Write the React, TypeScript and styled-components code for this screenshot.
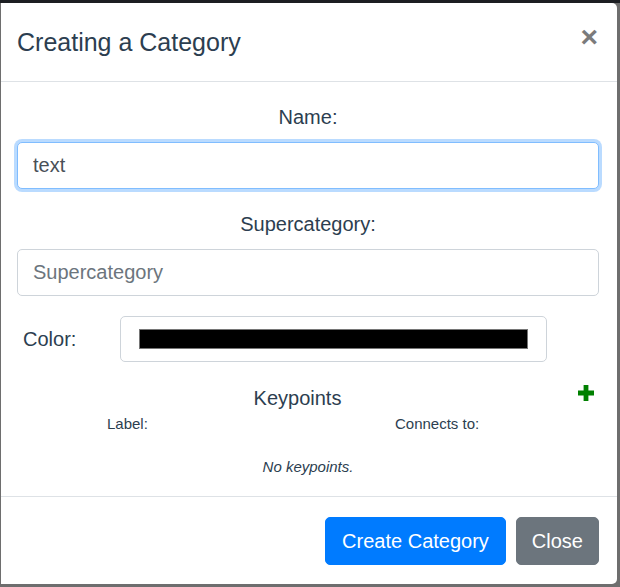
import React, { useState } from 'react';
import styled, { createGlobalStyle } from 'styled-components';

const GlobalStyle = createGlobalStyle`
  html, body {
    margin: 0;
    padding: 0;
  }

  body {
    background: #6e6e6e;
    font-family: "Liberation Sans", Arial, sans-serif;
    color: #2c3e50;
  }
`;

const Backdrop = styled.div`
  width: 620px;
  height: 587px;
  overflow: hidden;
  background: #6e6e6e;
`;

const NavStrip = styled.div`
  height: 3px;
  background: #1c1e22;
`;

const Modal = styled.div`
  margin-left: 1px;
  width: 616px;
  height: 581px;
  display: flex;
  flex-direction: column;
  background: #fff;
  border-radius: 0 5px 5px 0;
  box-sizing: border-box;
`;

const Header = styled.div`
  display: flex;
  align-items: flex-start;
  justify-content: space-between;
  padding: 21px 18px 21px 16px;
  border-bottom: 1px solid #dee2e6;
`;

const Title = styled.h4`
  margin: 0;
  font-size: 25px;
  font-weight: 400;
  line-height: 36px;
  color: #2c3e50;
`;

const CloseX = styled.button`
  border: 0;
  background: transparent;
  padding: 0;
  margin: -2px 1px 0 0;
  height: 30px;
  font-family: "Liberation Sans", Arial, sans-serif;
  font-size: 30px;
  font-weight: 700;
  line-height: 30px;
  color: #7b7b7b;
  cursor: pointer;
`;

const Body = styled.div`
  flex: 1;
  padding: 20px 18px 17px 16px;
`;

const Group = styled.div`
  margin-bottom: 20px;
`;

const Label = styled.label`
  display: block;
  text-align: center;
  font-size: 20px;
  line-height: 30px;
  margin-bottom: 10px;
`;

const Input = styled.input<{ $focused?: boolean }>`
  display: block;
  box-sizing: border-box;
  width: 100%;
  height: 47px;
  padding: 0 15px;
  font-family: "Liberation Sans", Arial, sans-serif;
  font-size: 20px;
  color: #495057;
  background: #fff;
  border: 1px solid ${p => (p.$focused ? '#80bdff' : '#ced4da')};
  border-radius: 5px;
  outline: none;
  box-shadow: ${p => (p.$focused ? '0 0 0 3px rgba(0, 123, 255, 0.27)' : 'none')};

  &::placeholder {
    color: #6c757d;
  }
`;

const ColorRow = styled.div`
  display: grid;
  grid-template-columns: 103px 427px;
  align-items: center;
  margin-top: 1px;
`;

const ColorLabel = styled.span`
  padding-left: 6px;
  font-size: 20px;
  line-height: 30px;
`;

const ColorBox = styled.div`
  box-sizing: border-box;
  height: 46px;
  padding: 12px 18px;
  border: 1px solid #ced4da;
  border-radius: 5px;
`;

const Swatch = styled.div<{ $color: string }>`
  height: 20px;
  background: ${p => p.$color};
  border: 1px solid #767676;
  box-sizing: border-box;
`;

const KeypointsHead = styled.div`
  display: flex;
  align-items: flex-start;
  margin-top: 21px;
`;

const KeypointsTitle = styled.div`
  flex: 1;
  text-align: center;
  font-size: 20px;
  line-height: 30px;
`;

const AddButton = styled.button`
  border: 0;
  background: transparent;
  padding: 2px 5px 0 0;
  cursor: pointer;
  display: flex;
`;

const ColumnHeads = styled.div`
  display: grid;
  grid-template-columns: 288px auto;
  padding-left: 90px;
  font-size: 15px;
  line-height: 22.5px;
`;

const Empty = styled.p`
  margin: 20px 0 0;
  text-align: center;
  font-size: 15px;
  font-style: italic;
  line-height: 22.5px;
`;

const Footer = styled.div`
  display: flex;
  justify-content: flex-end;
  gap: 10px;
  padding: 20px 18px 19px;
  border-top: 1px solid #dee2e6;
`;

const Button = styled.button<{ $variant: 'primary' | 'secondary' }>`
  height: 48px;
  padding: 0 ${p => (p.$variant === 'primary' ? 16 : 15)}px;
  font-family: "Liberation Sans", Arial, sans-serif;
  font-size: 20px;
  line-height: 30px;
  color: #fff;
  background: ${p => (p.$variant === 'primary' ? '#007bff' : '#6c757d')};
  border: 1px solid ${p => (p.$variant === 'primary' ? '#007bff' : '#6c757d')};
  border-radius: 5px;
  cursor: pointer;
`;

const PlusIcon = () => (
  <svg width="16" height="16" viewBox="0 0 16 16">
    <path d="M5.6 0h4.8v5.6H16v4.8h-5.6V16H5.6v-5.6H0V5.6h5.6z" fill="#008000" />
  </svg>
);

const App = () => {
  const [name, setName] = useState('text');
  const [supercategory, setSupercategory] = useState('');
  const color = '#000000';

  return (
    <Backdrop>
      <GlobalStyle />
      <NavStrip />
      <Modal>
        <Header>
          <Title>Creating a Category</Title>
          <CloseX aria-label="Close">×</CloseX>
        </Header>
        <Body>
          <Group>
            <Label>Name:</Label>
            <Input
              $focused
              value={name}
              onChange={e => setName(e.target.value)}
              placeholder="Name"
            />
          </Group>
          <Group>
            <Label>Supercategory:</Label>
            <Input
              value={supercategory}
              onChange={e => setSupercategory(e.target.value)}
              placeholder="Supercategory"
            />
          </Group>
          <ColorRow>
            <ColorLabel>Color:</ColorLabel>
            <ColorBox>
              <Swatch $color={color} />
            </ColorBox>
          </ColorRow>
          <KeypointsHead>
            <KeypointsTitle>Keypoints</KeypointsTitle>
            <AddButton aria-label="Add keypoint">
              <PlusIcon />
            </AddButton>
          </KeypointsHead>
          <ColumnHeads>
            <span>Label:</span>
            <span>Connects to:</span>
          </ColumnHeads>
          <Empty>No keypoints.</Empty>
        </Body>
        <Footer>
          <Button $variant="primary">Create Category</Button>
          <Button $variant="secondary">Close</Button>
        </Footer>
      </Modal>
    </Backdrop>
  );
};

export default App;
